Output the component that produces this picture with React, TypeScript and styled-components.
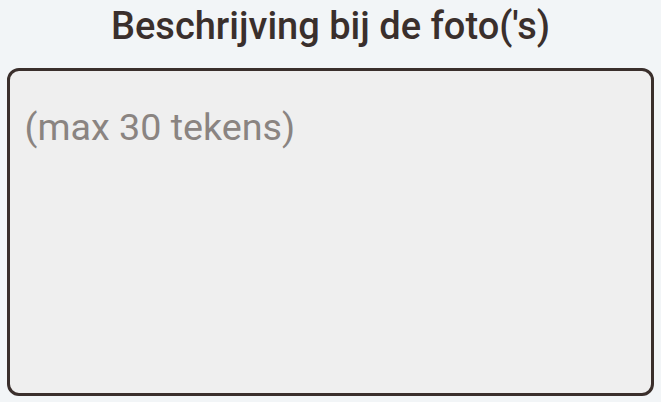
import React from "react";
import styled, { createGlobalStyle } from "styled-components";

const Global = createGlobalStyle`
  html, body { margin: 0; padding: 0; background: #f2f5f7; }
  body { font-family: Roboto, "Liberation Sans", sans-serif; }
`;

const Wrapper = styled.div`
  display: flex;
  flex-direction: column;
  align-items: stretch;
  padding: 0 7px 0 7px;
  height: 402px;
  box-sizing: border-box;
`;

const Title = styled.h1`
  margin: 0;
  padding-top: 5px;
  height: 68px;
  box-sizing: border-box;
  text-align: center;
  font-size: 38px;
  font-weight: 500;
  color: #3a2f2c;
  line-height: 42px;
`;

const Field = styled.textarea`
  box-sizing: border-box;
  width: 646.5px;
  height: 328px;
  margin: 0;
  border: 3.5px solid #3a2f2c;
  border-radius: 12px;
  background: #efefef;
  padding: 33.5px 15px 14px 14.5px;
  font-family: Roboto, "Liberation Sans", sans-serif;
  font-size: 37.7px;
  color: #3a2f2c;
  resize: none;
  outline: none;
  &::placeholder { color: #8a8481; opacity: 1; }
`;

export default function App() {
  return (
    <>
      <Global />
      <Wrapper>
        <Title>Beschrijving bij de foto('s)</Title>
        <Field placeholder="(max 30 tekens)" />
      </Wrapper>
    </>
  );
}
